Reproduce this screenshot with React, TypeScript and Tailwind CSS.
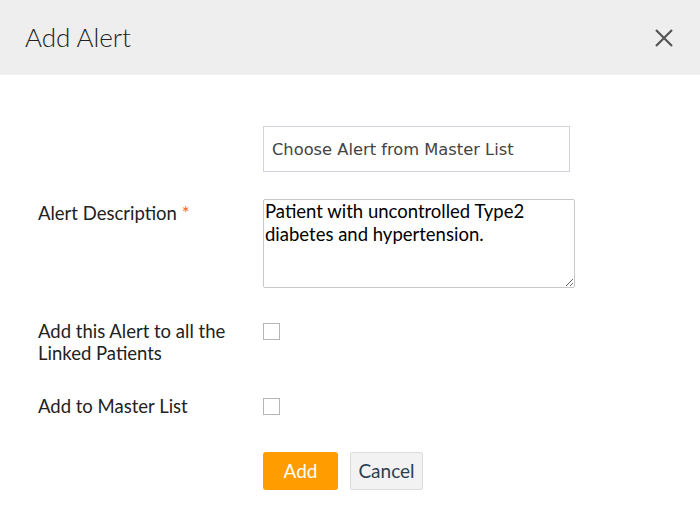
import { useState } from 'react';

export default function App() {
  const [desc, setDesc] = useState('Patient with uncontrolled Type2 diabetes and hypertension.');
  const [linked, setLinked] = useState(false);
  const [master, setMaster] = useState(false);

  return (
    <div className="h-[518px] w-[700px] bg-white font-['Lato',sans-serif] text-[#222]">
      {/* Header */}
      <div className="flex h-[75px] items-center justify-between bg-[#eeeeee] pl-[25px] pr-[26px]">
        <h2 className="text-[26px] font-light text-[#222]">Add Alert</h2>
        <button className="flex h-[20px] w-[20px] items-center justify-center text-[#555]">
          <svg width="20" height="20" viewBox="0 0 20 20">
            <path d="M2 2L18 18M18 2L2 18" stroke="currentColor" strokeWidth="2.2" />
          </svg>
        </button>
      </div>

      {/* Form */}
      <div className="pl-[38px] pt-[51px]">
        <div className="grid grid-cols-[225px_1fr]">
          <div />
          <input
            className="h-[46px] w-[307px] border border-[#d3d3e0] px-[8px] font-['DejaVu_Sans',sans-serif] text-[16.3px] text-[#444] placeholder:text-[#444] outline-none"
            placeholder="Choose Alert from Master List"
          />
        </div>

        <div className="mt-[27px] grid grid-cols-[225px_1fr]">
          <label className="pt-[3px] text-[18.5px] leading-[22px] text-[#222]">
            Alert Description <span className="text-[#f26a1b]">*</span>
          </label>
          <textarea
            value={desc}
            onChange={(e) => setDesc(e.target.value)}
            className="h-[89px] w-[312px] resize-y rounded-[2px] border border-[#c8c8c8] px-[1px] py-0 text-[18.5px] leading-[23px] text-black outline-none"
          />
        </div>

        <div className="mt-[32px] grid grid-cols-[225px_1fr]">
          <label className="text-[18.5px] leading-[22px] text-[#222]">
            Add this Alert to all the
            <br />
            Linked Patients
          </label>
          <div className="pt-[2px]">
            <input
              type="checkbox"
              checked={linked}
              onChange={() => setLinked(!linked)}
              className="h-[17px] w-[17px] appearance-none border border-[#b5b5b5] bg-white checked:bg-[#ff9c00]"
            />
          </div>
        </div>

        <div className="mt-[31px] grid grid-cols-[225px_1fr]">
          <label className="text-[18.5px] leading-[22px] text-[#222]">Add to Master List</label>
          <div className="pt-[2px]">
            <input
              type="checkbox"
              checked={master}
              onChange={() => setMaster(!master)}
              className="h-[17px] w-[17px] appearance-none border border-[#b5b5b5] bg-white checked:bg-[#ff9c00]"
            />
          </div>
        </div>

        <div className="mt-[31px] grid grid-cols-[225px_1fr]">
          <div />
          <div className="flex gap-[12px]">
            <button className="h-[38px] w-[75px] rounded-[3px] bg-[#ff9c00] text-[19px] text-white">Add</button>
            <button className="h-[38px] w-[73px] rounded-[2px] border border-[#dcdcdc] bg-[#f2f2f2] text-[19px] text-[#2d3e50]">
              Cancel
            </button>
          </div>
        </div>
      </div>
    </div>
  );
}
